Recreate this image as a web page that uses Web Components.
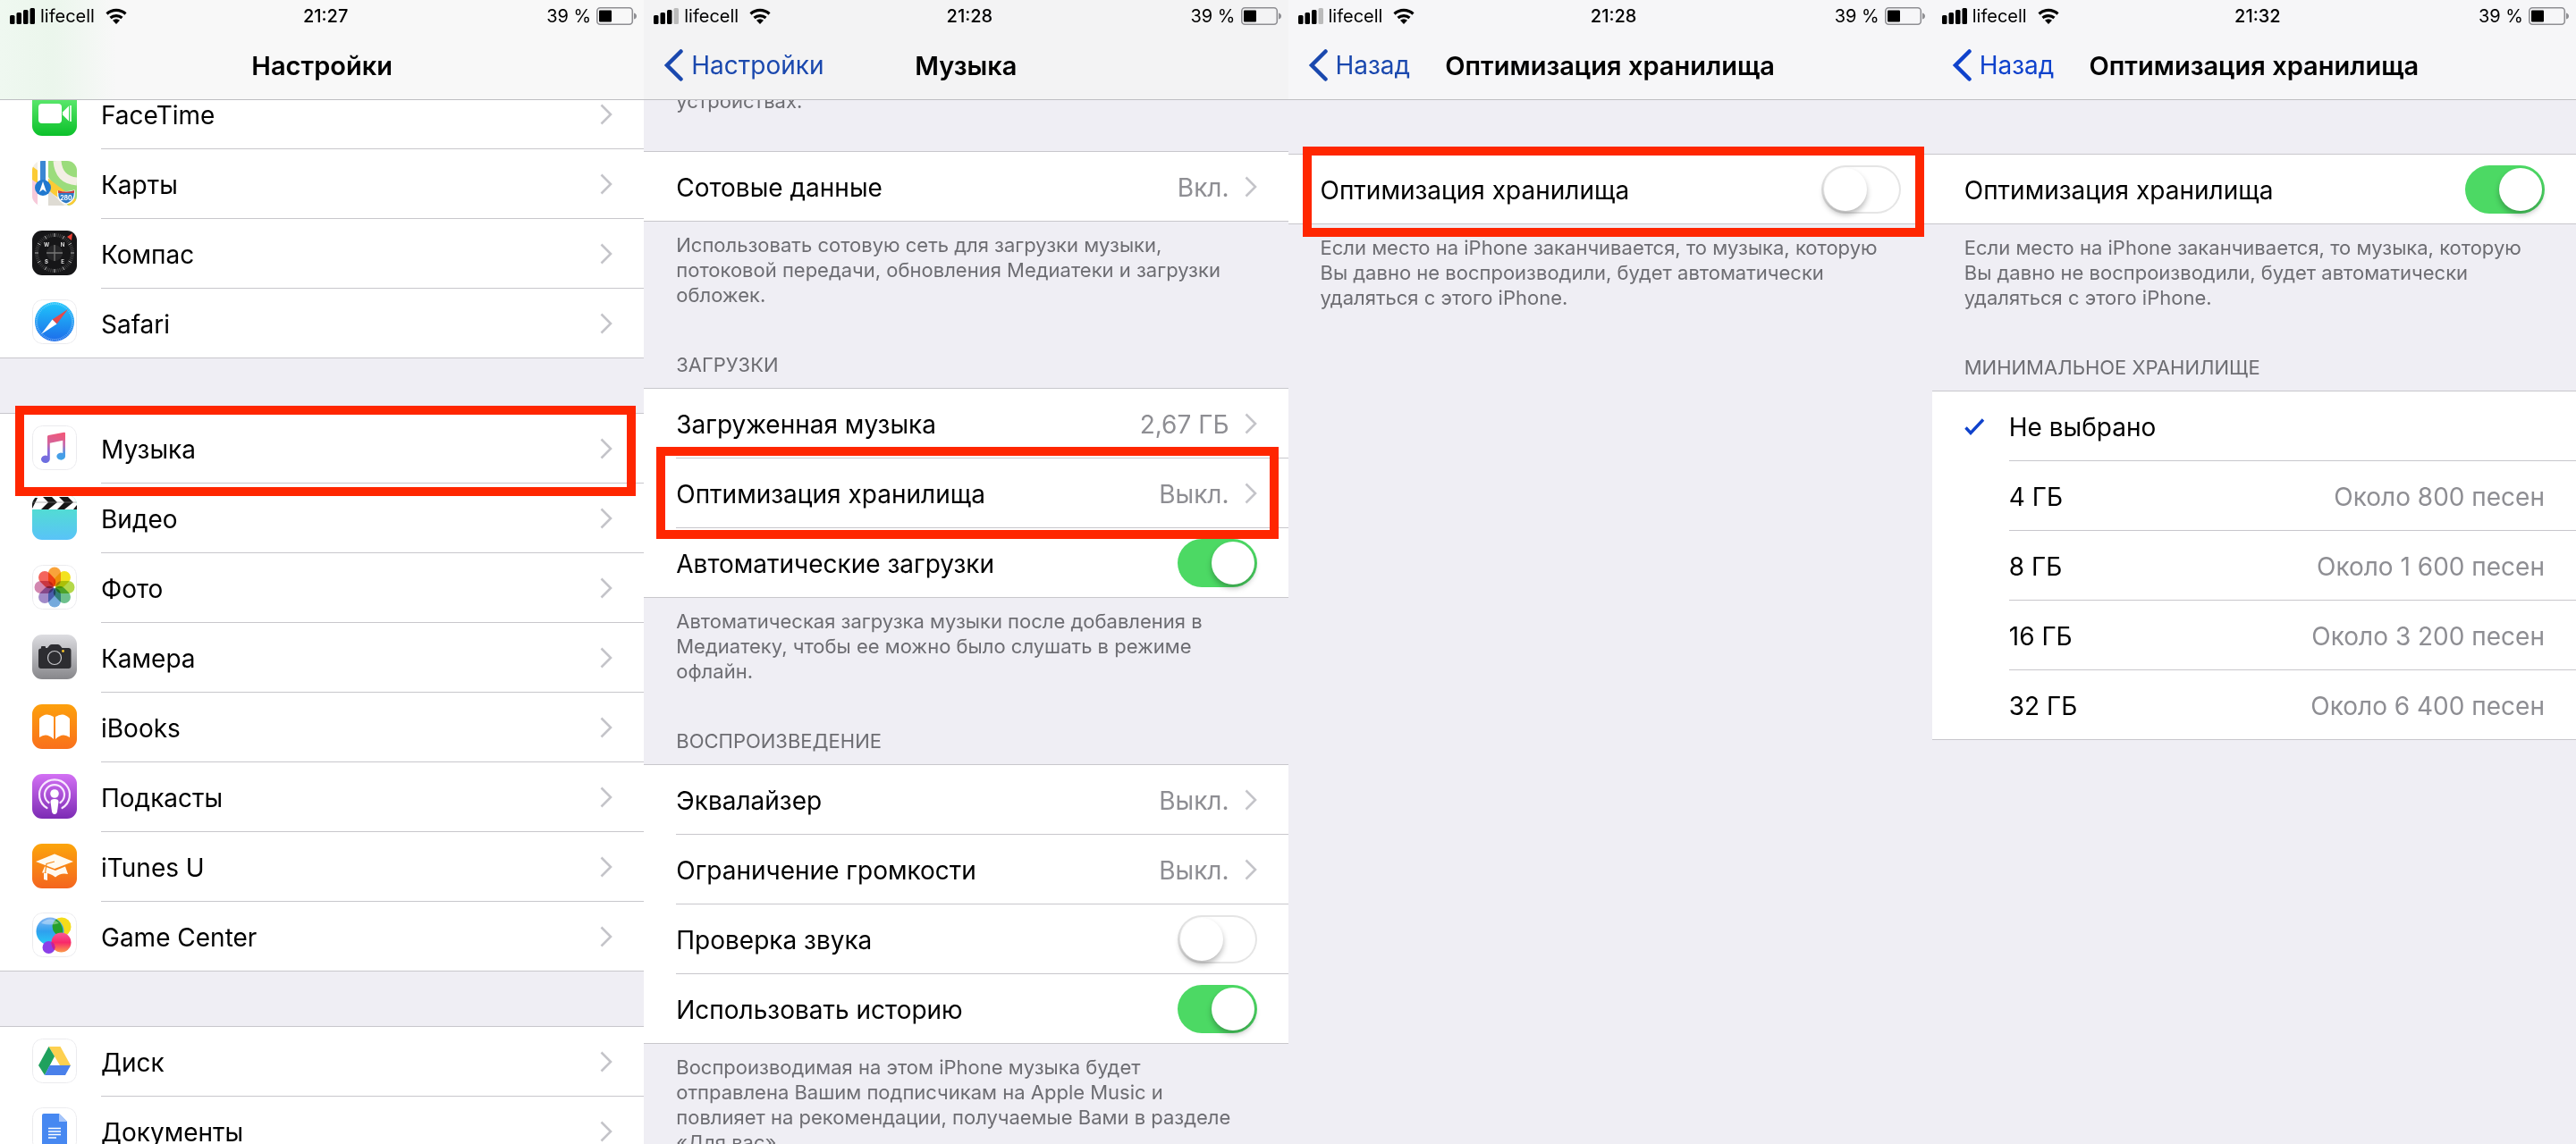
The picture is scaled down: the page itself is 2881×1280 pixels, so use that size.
<!DOCTYPE html>
<html lang="ru">
<head>
<meta charset="utf-8">
<title>Настройки</title>
<style>
  body {
    margin: 0;
    height: 100vh;
    overflow: hidden;
    display: grid;
    grid-template-columns: repeat(4, 1fr);
    background: #efeef4;
    color: #000;
    font-family: Inter, "Liberation Sans", sans-serif;
    font-size: 28px;
  }
  settings-note + settings-group:not([heading]) { margin-top: 42px; }
  nav-bar + settings-group { margin-top: 0; }
</style>
</head>
<body>

<phone-screen style="--bar: linear-gradient(90deg, #eff8f0, #ebf6ec 60px, #f8f8f8 130px); --scroll: -84px">
  <status-bar slot="status" time="21:27" signal="4"></status-bar>
  <nav-bar slot="nav">Настройки</nav-bar>
  <settings-group>
    <settings-row><app-icon slot="icon" name="facetime"></app-icon>FaceTime</settings-row>
    <settings-row><app-icon slot="icon" name="maps"></app-icon>Карты</settings-row>
    <settings-row><app-icon slot="icon" name="compass"></app-icon>Компас</settings-row>
    <settings-row><app-icon slot="icon" name="safari"></app-icon>Safari</settings-row>
  </settings-group>
  <settings-group>
    <settings-row highlight style="--frame: -9px 9px -14px 17px"><app-icon slot="icon" name="music"></app-icon>Музыка</settings-row>
    <settings-row><app-icon slot="icon" name="video"></app-icon>Видео</settings-row>
    <settings-row><app-icon slot="icon" name="photos"></app-icon>Фото</settings-row>
    <settings-row><app-icon slot="icon" name="camera"></app-icon>Камера</settings-row>
    <settings-row><app-icon slot="icon" name="ibooks"></app-icon>iBooks</settings-row>
    <settings-row><app-icon slot="icon" name="podcasts"></app-icon>Подкасты</settings-row>
    <settings-row><app-icon slot="icon" name="itunesu"></app-icon>iTunes U</settings-row>
    <settings-row><app-icon slot="icon" name="gamecenter"></app-icon>Game Center</settings-row>
  </settings-group>
  <settings-group>
    <settings-row><app-icon slot="icon" name="drive"></app-icon>Диск</settings-row>
    <settings-row><app-icon slot="icon" name="docs"></app-icon>Документы</settings-row>
  </settings-group>
</phone-screen>

<phone-screen style="--bar: #f3f3f4; --scroll: -85px; --tint: #1a48ae">
  <status-bar slot="status" time="21:28" signal="3"></status-bar>
  <nav-bar slot="nav" back="Настройки">Музыка</nav-bar>
  <settings-note>устройствах.</settings-note>
  <settings-group>
    <settings-row value="Вкл.">Сотовые данные</settings-row>
  </settings-group>
  <settings-note>Использовать сотовую сеть для загрузки музыки, потоковой передачи, обновления Медиатеки и загрузки обложек.</settings-note>
  <settings-group heading="Загрузки">
    <settings-row value="2,67 ГБ">Загруженная музыка</settings-row>
    <settings-row highlight style="--frame: -13px 11px -12px 14px" value="Выкл.">Оптимизация хранилища</settings-row>
    <settings-row switch="on">Автоматические загрузки</settings-row>
  </settings-group>
  <settings-note>Автоматическая загрузка музыки после добавления в Медиатеку, чтобы ее можно было слушать в режиме офлайн.</settings-note>
  <settings-group heading="Воспроизведение">
    <settings-row value="Выкл.">Эквалайзер</settings-row>
    <settings-row value="Выкл.">Ограничение громкости</settings-row>
    <settings-row switch="off">Проверка звука</settings-row>
    <settings-row switch="on">Использовать историю</settings-row>
  </settings-group>
  <settings-note>Воспроизводимая на этом iPhone музыка будет отправлена Вашим подписчикам на Apple Music и повлияет на рекомендации, получаемые Вами в разделе «Для вас».</settings-note>
</phone-screen>

<phone-screen style="--bar: #f6f6f8; --tint: #1a48ae">
  <status-bar slot="status" time="21:28" signal="3"></status-bar>
  <nav-bar slot="nav" back="Назад">Оптимизация хранилища</nav-bar>
  <settings-group>
    <settings-row highlight style="--frame: -9px 9px -14px 16px" switch="off">Оптимизация хранилища</settings-row>
  </settings-group>
  <settings-note>Если место на iPhone заканчивается, то музыка, которую Вы давно не воспроизводили, будет автоматически удаляться с этого iPhone.</settings-note>
</phone-screen>

<phone-screen style="--bar: #f6f6f8; --tint: #0f42cc">
  <status-bar slot="status" time="21:32" signal="4"></status-bar>
  <nav-bar slot="nav" back="Назад">Оптимизация хранилища</nav-bar>
  <settings-group>
    <settings-row switch="on">Оптимизация хранилища</settings-row>
  </settings-group>
  <settings-note>Если место на iPhone заканчивается, то музыка, которую Вы давно не воспроизводили, будет автоматически удаляться с этого iPhone.</settings-note>
  <settings-group heading="Минимальное хранилище">
    <storage-choice></storage-choice>
  </settings-group>
</phone-screen>

<script>
function attach(host, html) {
  const root = host.attachShadow({ mode: "open" });
  root.innerHTML = html;
  return root;
}

const chevron = `<svg class="chevron" width="14" height="24" viewBox="0 0 14 24" aria-hidden="true"><path d="M1.5 1.5 12 12 1.5 22.5" fill="none" stroke="#c4c4c9" stroke-width="2.6"/></svg>`;

// ---- app icons, all on a 50x50 tile ----

const white = `<rect x=".5" y=".5" width="49" height="49" rx="11" fill="#fff" stroke="#ebebee"/>`;

function tile(top, bottom) {
  return `<defs><linearGradient id="g" x2="0" y2="1"><stop stop-color="${top}"/><stop offset="1" stop-color="${bottom}"/></linearGradient></defs><rect width="50" height="50" fill="url(#g)"/>`;
}

function ticks(count, r1, r2, color, width) {
  let d = "";
  for (let i = 0; i < count; i++) {
    const a = (i / count) * Math.PI * 2;
    const x = Math.cos(a), y = Math.sin(a);
    d += `M${(25 + x * r1).toFixed(2)} ${(25 + y * r1).toFixed(2)}L${(25 + x * r2).toFixed(2)} ${(25 + y * r2).toFixed(2)}`;
  }
  return `<path d="${d}" stroke="${color}" stroke-width="${width}"/>`;
}

function petals() {
  const colors = ["#f9a33a", "#f3e21f", "#b4d84a", "#6dc08c", "#74a9dc", "#a18ac8", "#d287b0", "#f4655c"];
  return colors.map((c, i) =>
    `<rect x="18" y="2.500" width="14" height="21.500" rx="7" fill="${c}" style="mix-blend-mode:multiply" transform="rotate(${i * 45} 25 25)"/>`
  ).join("");
}

const icons = {
  facetime: tile("#6bf07a", "#0bc02a") + `<rect x="7" y="14" width="26" height="22" rx="4" fill="#fff"/><path d="M34 23.500 41 16.500V33.500L34 26.500Z" fill="#fff"/><path d="M43 16v18" stroke="#fff" stroke-width="1.600"/>`,
  maps: `<rect width="50" height="50" fill="#f3efe6"/>
    <path d="M18 0H50V50H40L18 18Z" fill="#9bdc7c"/>
    <path d="M0 20 7 14V50H0Z" fill="#f7c9da"/>
    <path d="M0 6 50 44V50H42L0 21Z" fill="#fbcb35"/>
    <path d="M18 32 36 50H18Z" fill="#dedbd3"/>
    <path d="M28 0C29 14 36 22 50 23" fill="none" stroke="#f3efe4" stroke-width="9"/>
    <path d="M6 0H18V50H6Z" fill="#fff"/><path d="M9 0h6v24H9z" fill="#3a87d2"/>
    <circle cx="12" cy="30" r="9" fill="#1f78cf"/><path d="M12 23 16 35 12 32 8 35Z" fill="#fff"/>
    <path d="M29 34Q38 36 47 33Q49 45 38 48Q27 45 29 34Z" fill="#2d7ac6" stroke="#fff" stroke-width="1.200"/>
    <path d="M29 36V33Q38 36 47 33V36Z" fill="#c73c40"/>
    <text x="38" y="43.500" font-size="7" font-weight="700" text-anchor="middle" fill="#fff">280</text>`,
  compass: `<rect width="50" height="50" fill="#161618"/>` + ticks(60, 18, 22, "#666", .6) + ticks(12, 18, 22, "#bbb", .9) +
    `<circle cx="25" cy="25" r="9" fill="#252527"/><path d="M25 16v18M16 25h18" stroke="#777" stroke-width="1.300"/><path d="M45 3 44 11 39 7Z" fill="#ee4035"/>
    <g font-size="6" font-weight="700" fill="#ddd" text-anchor="middle"><text x="16" y="18">W</text><text x="34" y="18">N</text><text x="16" y="37">S</text><text x="34" y="37">E</text></g>`,
  safari: white + `<defs><linearGradient id="s" x2="0" y2="1"><stop stop-color="#1fc6fb"/><stop offset="1" stop-color="#1d6cea"/></linearGradient></defs><circle cx="25" cy="25" r="22" fill="url(#s)"/>` +
    ticks(60, 19, 21.2, "#cdeaff", .5) + `<path d="M40 11 22.500 22.500 27.500 27.500Z" fill="#e5484a"/><path d="M10 39 22.500 22.500 27.500 27.500Z" fill="#fff"/>`,
  music: white + `<defs><linearGradient id="m" x1=".6" x2=".4" y2="1"><stop stop-color="#f0587a"/><stop offset=".4" stop-color="#d2649c"/><stop offset=".65" stop-color="#8b6cdc"/><stop offset="1" stop-color="#6b6ee0"/></linearGradient><linearGradient id="n" x2="0" y2="1"><stop stop-color="#ea5f80"/><stop offset=".45" stop-color="#c56bb0"/><stop offset=".75" stop-color="#4a9be8"/><stop offset="1" stop-color="#3fa4e6"/></linearGradient></defs>
    <path d="M34.200 8.500H37V34.500A4.800 4 0 1 1 34.200 31Z" fill="url(#n)"/>
    <path d="M17 12.500Q17 11.300 18.300 11L35.500 7.800Q37 7.500 37 9V16.200L19.800 19.800V37.500A4.900 4.200 0 1 1 17 34Z" fill="url(#m)"/>`,
  video: tile("#4fe7c3", "#59c3f8") + `<path d="M0 0H50V16H0Z" fill="#fff"/><path d="M0 3H6L0 15ZM10 16 18 8 12 2H22L28 8 18 16ZM28 16 36 8 30 2H40L46 8 36 16ZM46 16 50 11V16Z" fill="#171717"/><path d="M0 8h50" stroke="#888" stroke-width=".6"/>`,
  photos: white + `<g style="isolation:isolate">${petals()}</g>`,
  camera: tile("#dddde1", "#87878b") + `<path d="M10 15.500V14Q10 13 11 13H14Q15 13 15 14V15H17L19.500 12Q20.500 11 22 11H28.500Q30 11 31 12L33.500 15H40.500Q43.500 15 43.500 18V35Q43.500 38 40.500 38H10Q7 38 7 35V18Q7 15.500 10 15.500Z" fill="#2d2d31"/><circle cx="25" cy="26" r="7.500" fill="none" stroke="#c9c9cd" stroke-width="1.200"/><circle cx="34.500" cy="18.500" r="1.400" fill="#f7c52d"/>`,
  ibooks: tile("#fda00c", "#f9701c") + `<path d="M24 14V39Q16 31 8 37V16Q15 8 24 14ZM26 14V39Q34 31 42 37V16Q35 8 26 14Z" fill="#fff"/>`,
  podcasts: tile("#d370f4", "#7c2bb4") + `<g fill="none" stroke="#f8e8ff" stroke-width="2.200" stroke-linecap="round"><path d="M16.500 38A17 17 0 1 1 33.500 38"/><path d="M18.500 32A11 11 0 1 1 31.500 32"/></g><circle cx="25" cy="22" r="4.800" fill="#fff"/><path d="M20.500 31Q20.500 28 25 28T29.500 31L28 42Q27.500 45 25 45T22 42Z" fill="#fff"/>`,
  itunesu: tile("#fca50b", "#f4651f") + `<path d="M25 11.500 46 20 25 28 4 20Z" fill="#fffaf0"/><path d="M14 25.500 26 30 37 25.500 40 34Q32 32 26 37.500Q19 32 11 32.500Z" fill="#fffaf0"/><path d="M25 20 16 22.500 14.500 33" fill="none" stroke="#f58a1a" stroke-width="1.200"/><path d="M13 33h4v8l-4-1Z" fill="#fffaf0"/>`,
  gamecenter: white + `<defs><linearGradient id="b" x2="0" y2="1"><stop stop-color="#86b7f2"/><stop offset=".5" stop-color="#2fa0ee"/><stop offset="1" stop-color="#27ccf6"/></linearGradient><linearGradient id="r" x2="0" y2="1"><stop stop-color="#f75a9a"/><stop offset=".5" stop-color="#f8286a"/><stop offset="1" stop-color="#fb9a4a"/></linearGradient></defs>
    <circle cx="33" cy="16" r="10.500" fill="#f4dc1a"/><ellipse cx="20" cy="21" rx="15.500" ry="15.500" fill="url(#b)"/>
    <path d="M27 7.400A15.500 15.500 0 0 1 33 26.400A10.500 10.500 0 0 1 22.600 16A10.500 10.500 0 0 1 27 7.400Z" fill="#25a02b"/>
    <circle cx="18.500" cy="39" r="7" fill="#8b3fe8"/><circle cx="32.500" cy="33.500" r="11" fill="url(#r)"/><path d="M24.600 35.300A7 7 0 0 1 24.800 42A11 11 0 0 1 21.600 32.700A7 7 0 0 1 24.600 35.300Z" fill="#c01fa0"/>
    <path d="M10 12Q20 3 30 12Q20 15 10 12Z" fill="#fff" opacity=".35"/>`,
  drive: white + `<path d="M18.500 9H31.500L43 30H31Z" fill="#fdd04f"/><path d="M18.500 9 25 20 14 41 7 30Z" fill="#1fa15d"/><path d="M19.500 30H43L37 41H14Z" fill="#4a80ea"/>`,
  docs: white + `<path d="M13 7H30L39 16V50H11V9Q11 7 13 7Z" fill="#4788f1"/><path d="M30 7 39 16H30Z" fill="#a6c5fa"/><path d="M18 23.500h14M18 27h14M18 30.500h14M18 34h9" stroke="#fff" stroke-width="1.700"/>`,
};

class AppIcon extends HTMLElement {
  connectedCallback() {
    attach(this, `<style>
      :host { display: block; width: 50px; height: 50px; border-radius: 11px; overflow: hidden; }
      svg { display: block; }
    </style>
    <svg width="50" height="50" viewBox="0 0 50 50" aria-hidden="true">${icons[this.getAttribute("name")]}</svg>`);
  }
}

// ---- screen frame ----

class PhoneScreen extends HTMLElement {
  connectedCallback() {
    attach(this, `<style>
      :host { display: flex; flex-direction: column; min-width: 0; height: 100vh; overflow: hidden; }
      header { position: relative; z-index: 2; background: var(--bar); border-bottom: 1px solid #bebec2; }
      main { flex: 1; min-height: 0; overflow: hidden; }
      .content { padding-top: 60px; margin-top: var(--scroll, 0); }
    </style>
    <header><slot name="status"></slot><slot name="nav"></slot></header>
    <main><div class="content"><slot></slot></div></main>`);
  }
}

class StatusBar extends HTMLElement {
  connectedCallback() {
    const level = Number(this.getAttribute("signal"));
    const bars = [10, 13, 16, 18].map((h, i) =>
      `<rect x="${i * 7.5}" y="${18 - h}" width="5.500" height="${h}" rx="1.500" fill="${i < level ? "#000" : "#bbb"}"/>`
    ).join("");
    attach(this, `<style>
      :host { display: grid; grid-template-columns: 1fr auto 1fr; align-items: center; height: 35px; padding-left: 8px; font-size: 20px; }
      div { display: flex; align-items: center; }
      .left { gap: 6px; padding-left: 3px; }
      .wifi { margin-left: 6px; }
      .right { justify-content: flex-end; gap: 6px; padding-right: 8px; }
      b { font-weight: 500; }
      svg { display: block; }
    </style>
    <div class="left">
      <svg width="28" height="18" viewBox="0 0 28 18" aria-hidden="true">${bars}</svg>
      <span>lifecell</span>
      <svg class="wifi" width="24" height="18" viewBox="0 0 24 18" aria-hidden="true">
        <path d="M1.500 6.500A15.500 15.500 0 0 1 22.500 6.500M5.500 11A10 10 0 0 1 18.500 11" fill="none" stroke="#000" stroke-width="3.200"/>
        <path d="M8 13.800A6 6 0 0 1 16 13.800L12 18Z"/>
      </svg>
    </div>
    <b>${this.getAttribute("time")}</b>
    <div class="right">
      <span>39 %</span>
      <svg width="45" height="20" viewBox="0 0 45 20" aria-hidden="true">
        <rect x=".8" y=".8" width="39.500" height="18.400" rx="3.500" fill="none" stroke="#8f8f93" stroke-width="1.600"/>
        <rect x="3" y="3.500" width="14" height="13" rx="1"/>
        <path d="M42 6.500Q45 7.500 45 10T42 13.500Z" fill="#8f8f93"/>
      </svg>
    </div>`);
  }
}

class NavBar extends HTMLElement {
  connectedCallback() {
    const back = this.getAttribute("back");
    attach(this, `<style>
      :host { display: grid; grid-template-columns: 1fr auto 1fr; align-items: center; height: 76px; }
      h1 { margin: 0; font-size: 29px; font-weight: 600; }
      a { display: flex; align-items: center; gap: 9px; padding-left: 22px; color: var(--tint); text-decoration: none; }
      svg { display: block; }
    </style>
    <div>${back ? `<a href="#"><svg width="22" height="36" viewBox="0 0 22 36" aria-hidden="true"><path d="M19.500 2.500 4 18 19.500 33.500" fill="none" stroke="currentColor" stroke-width="4.500" stroke-linecap="round"/></svg>${back}</a>` : ""}</div>
    <h1><slot></slot></h1>`);
  }
}

// ---- lists ----

class SettingsGroup extends HTMLElement {
  connectedCallback() {
    const heading = this.getAttribute("heading");
    attach(this, `<style>
      :host { display: block; margin-top: 61px; }
      :host([heading]) { margin-top: 50px; }
      h2 { margin: 0; padding: 0 36px 12px; color: #6d6d72; font-size: 22px; font-weight: 400; line-height: 28px; text-transform: uppercase; }
      .list { background: #fff; border-top: 1px solid #c8c7cc; }
    </style>
    ${heading ? `<h2>${heading}</h2>` : ""}
    <div class="list"><slot></slot></div>`);
  }
}

class SettingsNote extends HTMLElement {
  connectedCallback() {
    attach(this, `<style>
      :host { display: block; padding: 12px 48px 0 36px; color: #6d6d72; font-size: 22px; line-height: 28px; }
      p { margin: 0; }
    </style>
    <p><slot></slot></p>`);
  }
}

class SettingsRow extends HTMLElement {
  connectedCallback() {
    const value = this.getAttribute("value");
    const toggle = this.getAttribute("switch");
    const tag = toggle ? "label" : "a";
    const end = toggle
      ? `<input type="checkbox" role="switch" ${toggle === "on" ? "checked" : ""}>`
      : `${value ? `<span class="value">${value}</span>` : ""}${chevron}`;
    attach(this, `<style>
      :host { display: block; position: relative; }
      .row { display: flex; align-items: center; height: 78px; padding-left: 36px; box-sizing: border-box; color: inherit; text-decoration: none; }
      :host(:last-child) .row { border-bottom: 1px solid #c8c7cc; }
      ::slotted(app-icon) { margin: 0 27px 3px 0; }
      .body { flex: 1; align-self: stretch; display: flex; align-items: center; gap: 17px; padding-right: 35px; border-bottom: 1px solid #c8c7cc; }
      :host(:last-child) .body { border-bottom: 0; }
      .text { flex: 1; padding-top: 3px; }
      .value { padding-top: 3px; color: #8e8e93; }
      .chevron { display: block; }
      input {
        appearance: none; display: flex; width: 89px; height: 54px; margin: 0; padding: 3px; box-sizing: border-box;
        border-radius: 27px; background: #fff; box-shadow: inset 0 0 0 2px #e5e5e5;
      }
      input::before { content: ""; width: 48px; height: 48px; border-radius: 50%; background: #fff; box-shadow: 0 4px 6px rgba(0, 0, 0, .28); }
      input:checked { justify-content: flex-end; background: #4cd964; box-shadow: none; }
      :host([highlight]) { z-index: 1; }
      :host([highlight])::after { content: ""; position: absolute; inset: var(--frame); border: 10px solid #ff2600; pointer-events: none; }
    </style>
    <${tag} class="row" ${toggle ? "" : 'href="#"'}>
      <slot name="icon"></slot>
      <span class="body"><span class="text"><slot></slot></span>${end}</span>
    </${tag}>`);
  }
}

class StorageChoice extends HTMLElement {
  static options = [
    ["Не выбрано", ""],
    ["4 ГБ", "Около 800 песен"],
    ["8 ГБ", "Около 1 600 песен"],
    ["16 ГБ", "Около 3 200 песен"],
    ["32 ГБ", "Около 6 400 песен"],
  ];

  connectedCallback() {
    const rows = StorageChoice.options.map(([name, songs], i) => `
      <label>
        <input type="radio" name="storage" ${i === 0 ? "checked" : ""}>
        <svg width="23" height="19" viewBox="0 0 23 19" aria-hidden="true"><path d="M1.500 10.500 7 16.500 21 1.500" fill="none" stroke="currentColor" stroke-width="3.400"/></svg>
        <span class="body"><span>${name}</span><span class="songs">${songs}</span></span>
      </label>`).join("");
    attach(this, `<style>
      :host { display: block; border-bottom: 1px solid #c8c7cc; }
      label { display: flex; align-items: center; height: 78px; padding-left: 36px; }
      label:last-child, label:last-child .body { height: 77px; border: 0; }
      input { appearance: none; margin: 0; width: 0; }
      svg { width: 23px; margin-right: 27px; color: var(--tint); visibility: hidden; }
      input:checked + svg { visibility: visible; }
      .body { flex: 1; height: 78px; box-sizing: border-box; display: flex; align-items: center; justify-content: space-between; padding: 3px 35px 0 0; border-bottom: 1px solid #c8c7cc; }
      .songs { color: #8e8e93; }
    </style>${rows}`);
  }
}

customElements.define("app-icon", AppIcon);
customElements.define("phone-screen", PhoneScreen);
customElements.define("status-bar", StatusBar);
customElements.define("nav-bar", NavBar);
customElements.define("settings-group", SettingsGroup);
customElements.define("settings-note", SettingsNote);
customElements.define("settings-row", SettingsRow);
customElements.define("storage-choice", StorageChoice);
</script>
</body>
</html>
